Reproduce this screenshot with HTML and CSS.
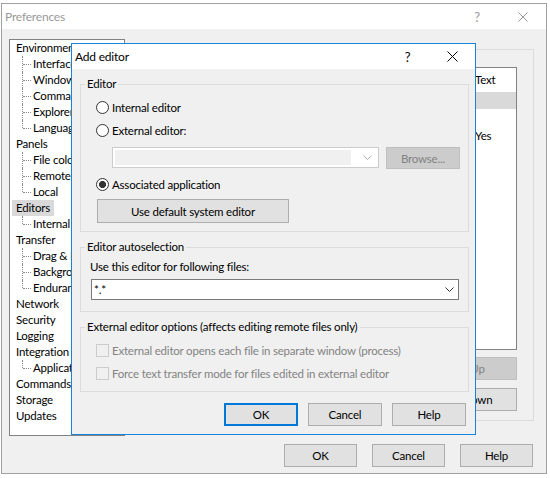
FILE: index.html
```
<!DOCTYPE html>
<html lang="en">
<head>
    <meta charset="UTF-8">
    <title>Preferences</title>
    <link rel="stylesheet" href="styles.css">
</head>
<body>
    <div class="window">
        <div class="titlebar">
            <span class="title">Preferences</span>
            <span class="cap-btn">?</span>
            <span class="cap-btn">
                <svg width="10" height="10" viewBox="0 0 10 10"><path d="M0.5 0.5 L9.5 9.5 M9.5 0.5 L0.5 9.5" stroke="#999" stroke-width="1"/></svg>
            </span>
        </div>
        <div class="main">
            <div class="tree">
                <div class="node">Environment</div>
                <div class="node child">Interface</div>
                <div class="node child">Window</div>
                <div class="node child">Commander</div>
                <div class="node child">Explorer</div>
                <div class="node child last">Languages</div>
                <div class="node">Panels</div>
                <div class="node child">File colors</div>
                <div class="node child">Remote</div>
                <div class="node child last">Local</div>
                <div class="node"><span class="selected">Editors</span></div>
                <div class="node child last">Internal editor</div>
                <div class="node">Transfer</div>
                <div class="node child">Drag &amp; Drop</div>
                <div class="node child">Background</div>
                <div class="node child last">Endurance</div>
                <div class="node">Network</div>
                <div class="node">Security</div>
                <div class="node">Logging</div>
                <div class="node">Integration</div>
                <div class="node child last">Applications</div>
                <div class="node">Commands</div>
                <div class="node">Storage</div>
                <div class="node">Updates</div>
            </div>
            <div class="panel">
                <div class="list">
                    <div class="list-row head"><span class="cell"></span><span class="cell last">Text</span></div>
                    <div class="list-row hilite"><span class="cell"></span><span class="cell last"></span></div>
                    <div class="list-row yes"><span class="cell"></span><span class="cell last">Yes</span></div>
                </div>
                <div class="side-buttons">
                    <button class="btn side" disabled>Up</button>
                    <button class="btn side">Down</button>
                </div>
            </div>
        </div>
        <div class="footer">
            <button class="btn">OK</button>
            <button class="btn">Cancel</button>
            <button class="btn">Help</button>
        </div>
    </div>

    <div class="dialog">
        <div class="dlg-title">
            <span class="title">Add editor</span>
            <span class="cap-btn">?</span>
            <span class="cap-btn">
                <svg width="11" height="11" viewBox="0 0 11 11"><path d="M0.5 0.5 L10.5 10.5 M10.5 0.5 L0.5 10.5" stroke="#000" stroke-width="1"/></svg>
            </span>
        </div>
        <div class="dlg-body">
            <fieldset class="group">
                <legend>Editor</legend>
                <div class="group-body editor">
                    <label class="opt"><input type="radio" name="editor"> Internal editor</label>
                    <label class="opt"><input type="radio" name="editor"> External editor:</label>
                    <div class="ext-row">
                        <div class="combo off">
                            <span class="combo-field"></span>
                            <svg width="9" height="5" viewBox="0 0 9 5"><path d="M0.5 0.5 L4.5 4.5 L8.5 0.5" fill="none" stroke="#b0b0b0"/></svg>
                        </div>
                        <button class="btn browse" disabled>Browse...</button>
                    </div>
                    <label class="opt"><input type="radio" name="editor" checked> Associated application</label>
                    <button class="btn wide">Use default system editor</button>
                </div>
            </fieldset>

            <fieldset class="group">
                <legend>Editor autoselection</legend>
                <div class="group-body auto">
                    <div class="field-label">Use this editor for following files:</div>
                    <div class="combo">
                        <span class="combo-text">*.*</span>
                        <svg width="9" height="5" viewBox="0 0 9 5"><path d="M0.5 0.5 L4.5 4.5 L8.5 0.5" fill="none" stroke="#333"/></svg>
                    </div>
                </div>
            </fieldset>

            <fieldset class="group">
                <legend>External editor options (affects editing remote files only)</legend>
                <div class="group-body options">
                    <label class="opt off"><input type="checkbox" disabled> External editor opens each file in separate window (process)</label>
                    <label class="opt off"><input type="checkbox" disabled> Force text transfer mode for files edited in external editor</label>
                </div>
            </fieldset>

            <div class="dlg-buttons">
                <button class="btn default">OK</button>
                <button class="btn">Cancel</button>
                <button class="btn">Help</button>
            </div>
        </div>
    </div>
</body>
</html>
```

FILE: styles.css
```
body {
    margin: 0;
    padding: 3px 0 0 1px;
    background-color: #ffffff;
    font-family: Lato, "Liberation Sans", sans-serif;
    font-size: 11.5px;
    letter-spacing: -0.2px;
    color: #000000;
}

/* outer Preferences window */
.window {
    width: 546px;
    height: 471px;
    box-sizing: border-box;
    border: 1px solid #a0a0a0;
    background-color: #f0f0f0;
    display: flex;
    flex-direction: column;
}

.titlebar {
    height: 25px;
    background-color: #ffffff;
    display: flex;
    align-items: center;
    padding-left: 3px;
    color: #999999;
    font-size: 12px;
}

.titlebar .title {
    flex: 1;
}

.cap-btn {
    width: 46px;
    height: 25px;
    display: flex;
    align-items: center;
    justify-content: center;
    font-size: 13px;
}

.main {
    display: flex;
    padding: 10px 0 0 7px;
}

.tree {
    width: 116px;
    height: 397px;
    box-sizing: border-box;
    border: 1px solid #828282;
    background-color: #ffffff;
    overflow: hidden;
    white-space: nowrap;
}

.node {
    position: relative;
    height: 16px;
    line-height: 16px;
    padding-left: 2px;
}

.node .selected,
.node:not(.child) {
    padding-left: 6px;
}

.node .selected {
    display: inline-block;
    margin-left: -4px;
    padding: 0 4px;
    background-color: #d9d9d9;
}

.node.child {
    padding-left: 23px;
}

.node.child::before {
    content: "";
    position: absolute;
    left: 12px;
    top: 0;
    bottom: 0;
    border-left: 1px dotted #8a8a8a;
}

.node.child.last::before {
    bottom: 8px;
}

.node.child::after {
    content: "";
    position: absolute;
    left: 13px;
    top: 8px;
    width: 8px;
    border-top: 1px dotted #8a8a8a;
}

.panel {
    flex: 1;
    margin: 10px 12px 0 9px;
    height: 372px;
    box-sizing: border-box;
    border: 1px solid #dcdcdc;
    padding: 17px 16px 0 16px;
}

.list {
    height: 283px;
    box-sizing: border-box;
    border: 1px solid #828282;
    background-color: #ffffff;
}

.list-row {
    display: flex;
    height: 17px;
    line-height: 17px;
}

.list-row.head {
    height: 24px;
    line-height: 24px;
}

.list-row.hilite {
    background-color: #d9d9d9;
}

.list-row.yes {
    margin-top: 18px;
}

.cell {
    flex: 1;
}

.cell.last {
    flex: 0 0 41px;
}

.side-buttons {
    display: flex;
    flex-direction: column;
    align-items: flex-end;
    gap: 8px;
    margin-top: 7px;
}

.footer {
    display: flex;
    justify-content: flex-end;
    gap: 15px;
    padding: 8px 13px 0 0;
}

/* buttons */
.btn {
    width: 73px;
    height: 23px;
    box-sizing: border-box;
    border: 1px solid #adadad;
    background-color: #e1e1e1;
    font-family: inherit;
    font-size: 11.5px;
    letter-spacing: -0.2px;
    color: #000000;
    padding: 0;
}

.btn:disabled {
    background-color: #cccccc;
    border-color: #bfbfbf;
    color: #838383;
}

.btn.side {
    width: 79px;
}

.btn.default {
    border: 2px solid #0078d7;
}

/* Add editor dialog */
.dialog {
    position: absolute;
    left: 71px;
    top: 43px;
    width: 405px;
    height: 392px;
    box-sizing: border-box;
    border: 1px solid #1883d7;
    background-color: #f0f0f0;
    display: flex;
    flex-direction: column;
}

.dlg-title {
    height: 25px;
    background-color: #ffffff;
    display: flex;
    align-items: center;
    padding-left: 3px;
    font-size: 12px;
}

.dlg-title .title {
    flex: 1;
}

.dlg-title .cap-btn {
    width: 45px;
}

.dlg-body {
    padding: 7px 6px 0 8px;
}

.group {
    margin: 0 0 7px 0;
    padding: 0;
    border: 1px solid #dcdcdc;
    min-inline-size: auto;
}

.group legend {
    margin-left: 4px;
    padding: 0 2px;
    line-height: 16px;
}

.group-body.editor {
    padding: 4px 0 8px 15px;
}

.opt {
    display: flex;
    align-items: center;
    height: 23px;
}

.opt input {
    margin: 0 3px 0 0;
    width: 13px;
    height: 13px;
    appearance: none;
    box-sizing: border-box;
    border: 1px solid #333333;
    background-color: #ffffff;
}

.opt input[type="radio"] {
    border-radius: 50%;
}

.opt input[type="radio"]:checked {
    background: radial-gradient(circle, #333333 3.3px, #ffffff 3.8px);
}

.opt.off {
    color: #838383;
}

.opt input[type="checkbox"]:disabled {
    border-color: #cccccc;
    background-color: #f0f0f0;
}

.ext-row {
    display: flex;
    align-items: flex-start;
    margin: 5px 0 4px 16px;
}

.combo {
    height: 21px;
    box-sizing: border-box;
    border: 1px solid #7a7a7a;
    background-color: #ffffff;
    display: flex;
    align-items: center;
    padding-right: 4px;
}

.combo.off {
    width: 267px;
    border-color: #cccccc;
    padding: 2px 6px 2px 2px;
}

.combo-field {
    flex: 1;
    align-self: stretch;
    background-color: #f0f0f0;
    margin-right: 12px;
}

.combo-text {
    flex: 1;
    padding-left: 2px;
}

.browse {
    width: 74px;
    height: 22px;
    margin-left: 7px;
}

.wide {
    width: 192px;
    height: 24px;
    margin: 3px 0 0 1px;
}

.group-body.auto {
    padding: 4px 9px 11px 10px;
}

.field-label {
    height: 16px;
    line-height: 16px;
    margin: 0 0 4px -1px;
}

.group-body.options {
    padding: 4px 0 6px 15px;
}

.dlg-buttons {
    display: flex;
    justify-content: flex-end;
    gap: 10px;
    margin: 11px 3px 0 0;
}

.dlg-buttons .btn {
    width: 74px;
}
```
